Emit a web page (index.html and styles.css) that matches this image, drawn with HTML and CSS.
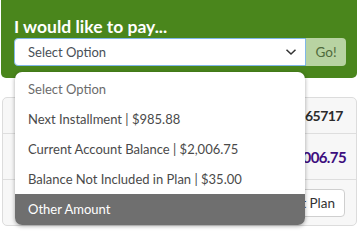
FILE: index.html
```html
<!DOCTYPE html>
<html>
<head>
<meta charset="utf-8">
<link rel="stylesheet" href="styles.css">
</head>
<body>
<div class="page">
  <section class="pay-panel">
    <h2 class="pay-title">I would like to pay...</h2>
    <div class="pay-form">
      <div class="select">
        <span class="select-value">Select Option</span>
        <svg class="chevron" width="12" height="8" viewBox="0 0 12 8"><path d="M1.5 1.8 L6 6 L10.5 1.8" fill="none" stroke="#333" stroke-width="1.5"/></svg>
      </div>
      <button class="go-btn">Go!</button>
    </div>
  </section>

  <section class="card">
    <div class="row row-head">
      <span class="value">4471-65717</span>
    </div>
    <div class="row">
      <span class="value purple">$2,006.75</span>
    </div>
    <div class="row">
      <button class="plan-btn">Edit Plan</button>
    </div>
  </section>

  <ul class="dropdown">
    <li class="opt placeholder">Select Option</li>
    <li class="opt">Next Installment | $985.88</li>
    <li class="opt">Current Account Balance | $2,006.75</li>
    <li class="opt">Balance Not Included in Plan | $35.00</li>
    <li class="opt active">Other Amount</li>
  </ul>
</div>
</body>
</html>
```

FILE: styles.css
```css
* { box-sizing: border-box; }
html, body { margin: 0; padding: 0; background: #fff; }
body { font-family: Lato, "Open Sans", sans-serif; color: #444; }
.page { position: relative; width: 360px; height: 231px; overflow: hidden; }

.pay-panel {
  margin-left: 1px;
  width: 356px;
  background: #4a861c;
  border-radius: 0 0 5px 5px;
  padding: 11px 11px 12px 13px;
}
.pay-title {
  margin: 0 0 3px 0;
  font-size: 17.5px;
  line-height: 24px;
  font-weight: 700;
  color: #fff;
  padding-top: 4px;
  height: 24px;
}
.pay-form { display: flex; height: 28px; }
.select {
  width: 292px;
  height: 28px;
  background: #fff;
  border: 1px solid #80b7e8;
  border-radius: 4px 0 0 4px;
  display: flex;
  align-items: center;
  justify-content: space-between;
  padding: 0 8px 0 13px;
  font-size: 13px;
  color: #495057;
}
.chevron { display: block; }
.go-btn {
  width: 40px;
  height: 28px;
  border: none;
  background: #b8d3a2;
  color: #4f6a3b;
  font-family: inherit;
  font-size: 13.5px;
  border-radius: 0 4px 4px 0;
  padding: 0;
}

.card {
  margin: 19px 0 0 2px;
  width: 355px;
  border: 1px solid #dcdcdc;
  border-radius: 5px;
  background: #f7f7f7;
}
.row {
  display: flex;
  align-items: center;
  justify-content: flex-end;
  padding: 0 10px 0 12px;
  height: 46px;
  border-top: 1px solid #dedede;
}
.row-head { height: 35px; border-top: none; padding-right: 13px; }
.value { font-size: 14px; font-weight: 700; color: #2b2b2b; letter-spacing: -0.5px; }
.value.purple { font-size: 15px; color: #3d0e7e; letter-spacing: -0.6px; }
.plan-btn {
  height: 28px;
  padding: 0 9px;
  background: #fff;
  border: 1px solid #cfcfcf;
  border-radius: 4px;
  font-family: inherit;
  font-size: 13.5px;
  color: #333;
  margin-right: 1px;
}

.dropdown {
  position: absolute;
  left: 15px;
  top: 72px;
  width: 290px;
  height: 153px;
  margin: 0;
  padding: 2px 0 0 0;
  list-style: none;
  background: #fff;
  border-radius: 7px;
  box-shadow: 0 1px 4px rgba(0,0,0,0.35);
  overflow: hidden;
  display: flex;
  flex-direction: column;
}
.opt {
  height: 30px;
  line-height: 30px;
  padding-left: 13px;
  font-size: 13px;
  color: #4a4a4a;
  white-space: nowrap;
}
.opt.placeholder { color: #6b6b6b; }
.opt.active {
  flex: 1;
  background: #6f6f6f;
  color: #fff;
  line-height: 31px;
}
```
